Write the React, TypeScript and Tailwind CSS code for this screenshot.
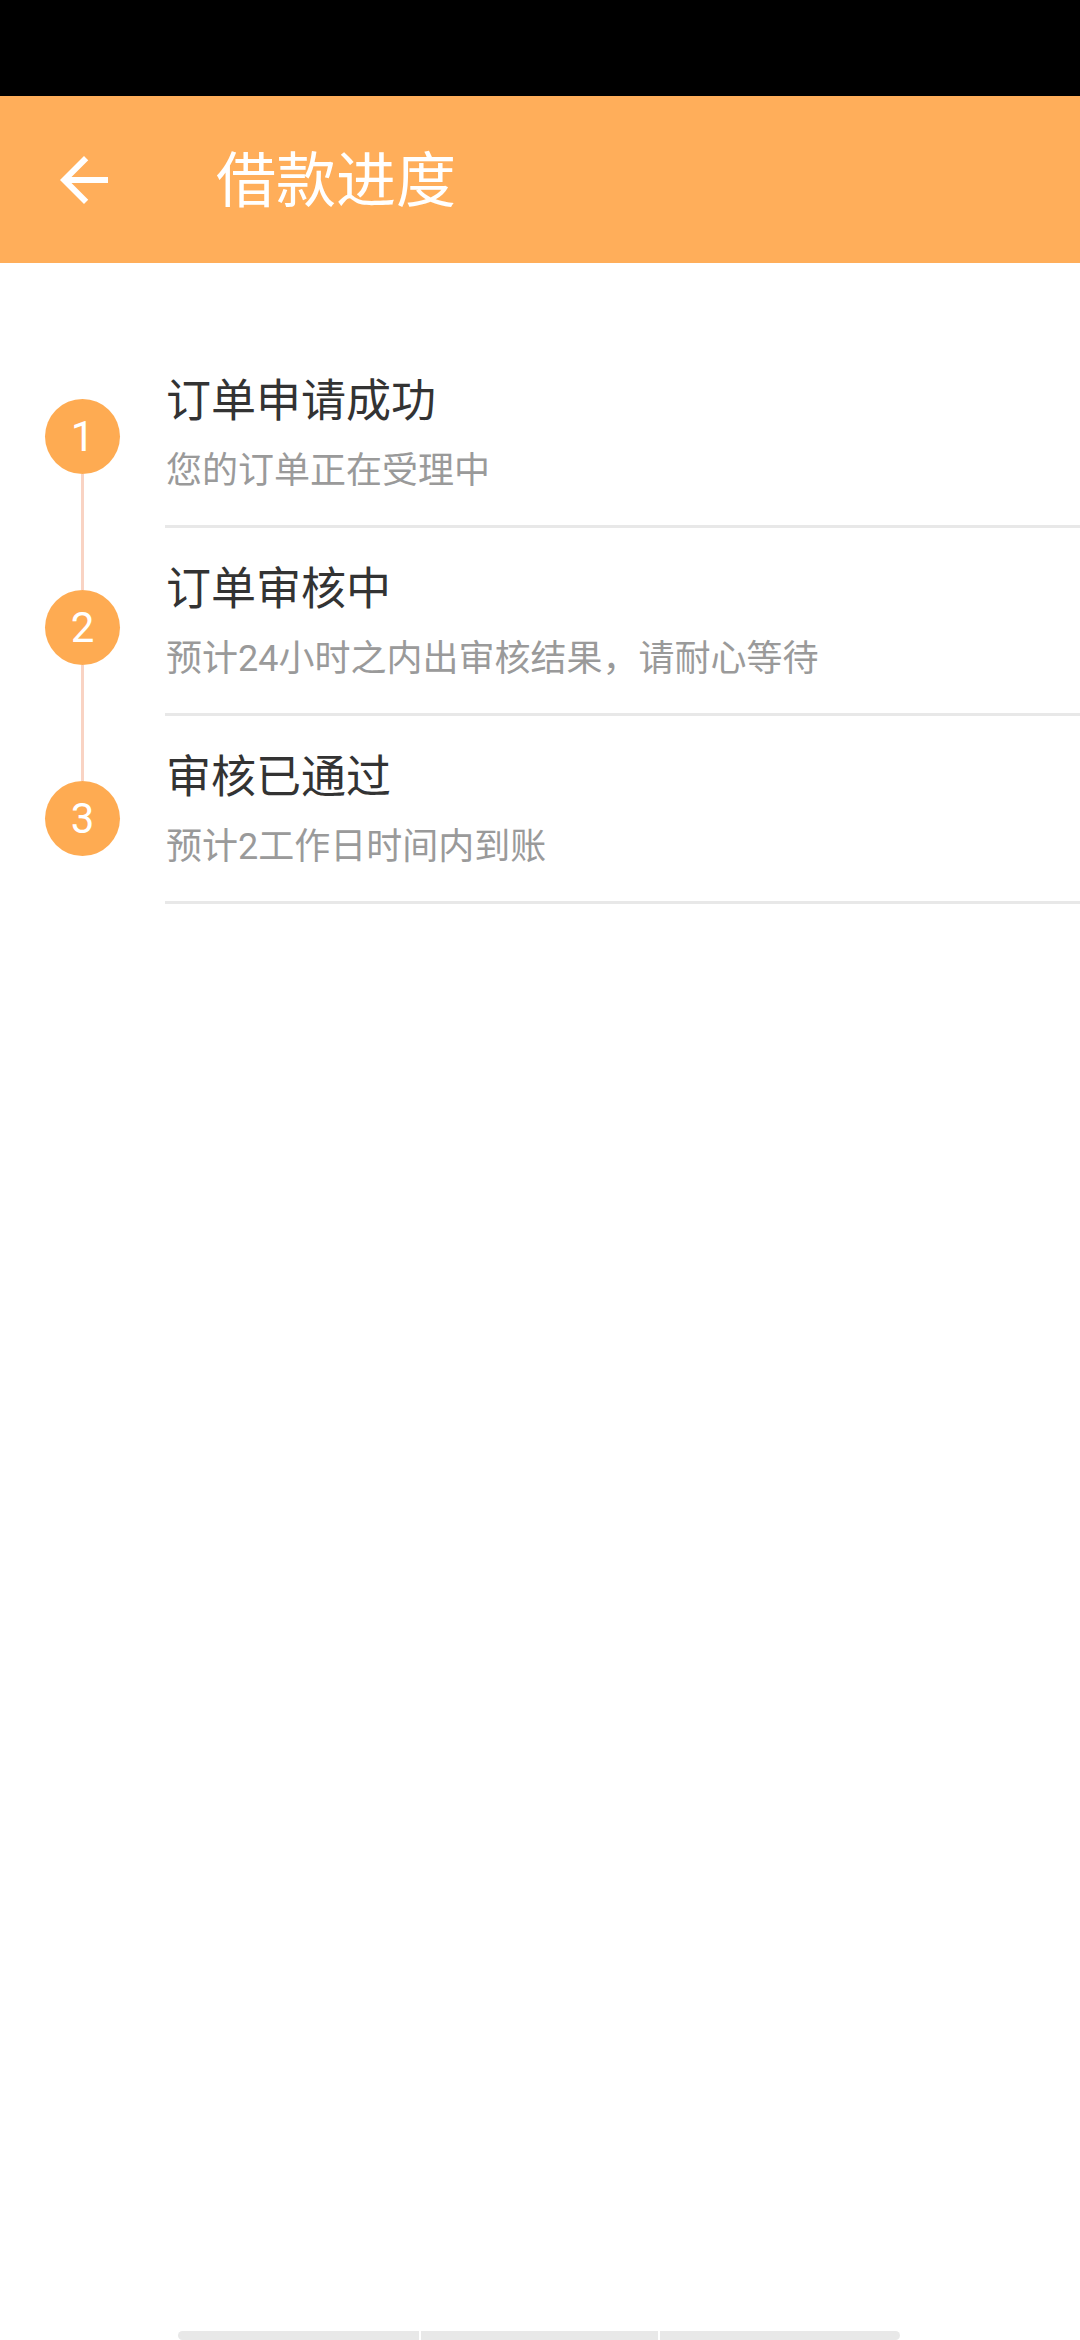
const steps = [
  { no: 1, title: '订单申请成功', desc: '您的订单正在受理中' },
  { no: 2, title: '订单审核中', desc: '预计24小时之内出审核结果，请耐心等待' },
  { no: 3, title: '审核已通过', desc: '预计2工作日时间内到账' },
];

const font = { fontFamily: 'Roboto, "Noto Sans CJK SC", sans-serif' };

function BackArrow() {
  return (
    <svg viewBox="0 0 24 24" className="w-[72px] h-[72px]" fill="#ffffff">
      <path d="M20 11H7.83l5.59-5.59L12 4l-8 8 8 8 1.41-1.41L7.83 13H20v-2z" />
    </svg>
  );
}

export default function App() {
  return (
    <div className="w-[1080px] h-[2340px] bg-white flex flex-col overflow-hidden" style={font}>
      {/* status bar */}
      <div className="h-[96px] bg-black shrink-0" />

      {/* toolbar */}
      <div className="h-[167px] bg-[#ffae5a] flex items-center shrink-0">
        <div className="pl-[48px] w-[216px] flex items-center">
          <BackArrow />
        </div>
        <div className="text-white text-[60px] leading-[72px] mt-[4px]">借款进度</div>
      </div>

      {/* progress list */}
      <div className="flex">
        <div className="w-[165px] shrink-0 pt-[136px] pl-[45px] flex flex-col">
          {steps.map((s, i) => (
            <div key={s.no} className="flex flex-col items-start">
              <div className="w-[75px] h-[75px] rounded-full bg-[#feab52] flex items-center justify-center text-white text-[42px] leading-none">
                {s.no}
              </div>
              {i < steps.length - 1 && (
                <div className="w-[3px] h-[116px] bg-[#f9d3c3] ml-[36px]" />
              )}
            </div>
          ))}
        </div>

        <div className="flex-1 pt-[77px]">
          {steps.map((s) => (
            <div key={s.no}>
              <div className="pt-[32px] pb-[30px] pl-[1px]">
                <div className="text-[45px] leading-[60px] text-[#333333]">{s.title}</div>
                <div className="mt-[15px] text-[36px] leading-[48px] text-[#9a9a9a]">{s.desc}</div>
              </div>
              <div className="h-[3px] bg-[#e8e8e8]" />
            </div>
          ))}
        </div>
      </div>

      <div className="flex-1" />

      {/* bottom handle */}
      <div className="h-[9px] flex pl-[178px] gap-[2px] shrink-0">
        <div className="w-[241px] bg-[#e8e8e8] rounded-l-full" />
        <div className="w-[237px] bg-[#e8e8e8]" />
        <div className="w-[240px] bg-[#e8e8e8] rounded-r-full" />
      </div>
    </div>
  );
}
